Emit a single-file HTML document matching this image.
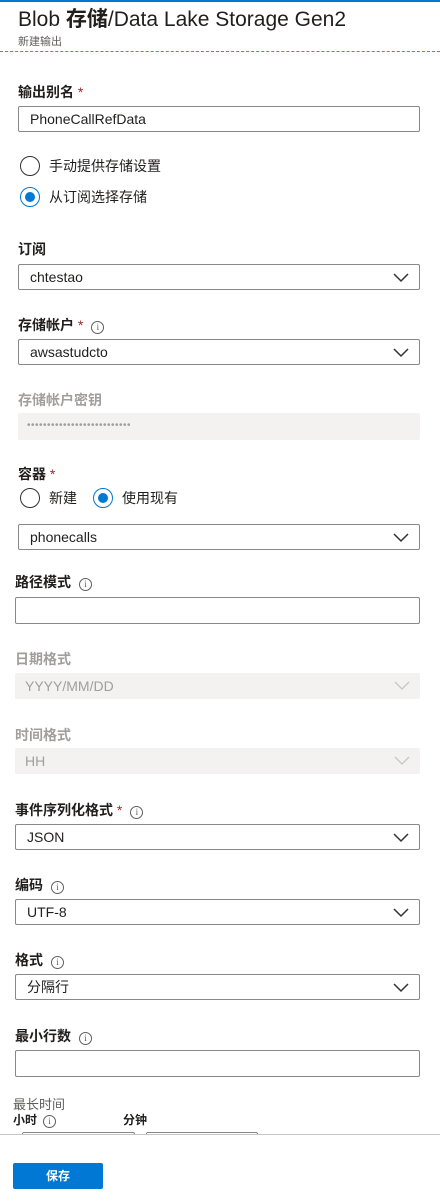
<!DOCTYPE html>
<html><head><meta charset="utf-8"><style>
*{margin:0;padding:0;box-sizing:border-box}
body{width:440px;height:1204px;position:relative;background:#fff;font-family:"Liberation Sans","Noto Sans CJK SC",sans-serif;color:#201f1e;overflow:hidden}
.a{position:absolute}
.lbl{position:absolute;font-size:14px;font-weight:bold;line-height:18px;white-space:nowrap}
.dis{color:#a19f9d}
.req{color:#a4262c;font-weight:normal}
.info{display:inline-block;width:13px;height:13px;border:1px solid #605e5c;border-radius:50%;font-size:9px;line-height:11px;text-align:center;color:#605e5c;font-weight:normal;vertical-align:0px;margin-left:8px;font-family:"Liberation Serif",serif}
.box{position:absolute;border:1px solid #8a8886;border-radius:2px;font-size:14px;line-height:24px;padding-left:11px;background:#fff}
.dbox{position:absolute;background:#f3f2f1;border-radius:2px;font-size:14px;line-height:26px;padding-left:10px;color:#a19f9d}
.chev{position:absolute;right:10px;top:8px;width:16px;height:10px}
.radio{position:absolute;width:20px;height:20px;border:1px solid #323130;border-radius:50%}
.radio.on{border-color:#0078d4}
.radio.on::after{content:"";position:absolute;left:4px;top:4px;width:10px;height:10px;border-radius:50%;background:#0078d4}
.rt{position:absolute;font-size:14px;line-height:18px;white-space:nowrap}
</style></head><body>
<div class="a" style="left:0;top:0;width:440px;height:2px;background:#0078d4"></div>
<div class="a" style="left:18px;top:7px;font-size:21px;line-height:26px;white-space:nowrap">Blob <b>存储</b>/Data Lake Storage Gen2</div>
<div class="a" style="left:18px;top:33px;font-size:11px;color:#605e5c">新建输出</div>
<div class="a" style="left:0;top:51px;width:440px;border-top:1px dashed #00a4ef"></div>

<div class="lbl" style="left:18px;top:83px">输出别名 <span class="req">*</span></div>
<div class="box" style="left:18px;top:106px;width:402px;height:26px">PhoneCallRefData</div>

<div class="radio" style="left:20px;top:156px"></div><div class="rt" style="left:49px;top:157px">手动提供存储设置</div>
<div class="radio on" style="left:20px;top:187px"></div><div class="rt" style="left:49px;top:188px">从订阅选择存储</div>

<div class="lbl" style="left:18px;top:240px">订阅</div>
<div class="box" style="left:18px;top:264px;width:402px;height:26px">chtestao<svg class="chev" viewBox="0 0 16 10"><path d="M1 1l7 7 7-7" fill="none" stroke="#323130" stroke-width="1.5"/></svg></div>

<div class="lbl" style="left:18px;top:316px">存储帐户 <span class="req">*</span><span class="info">i</span></div>
<div class="box" style="left:18px;top:339px;width:402px;height:26px">awsastudcto<svg class="chev" viewBox="0 0 16 10"><path d="M1 1l7 7 7-7" fill="none" stroke="#323130" stroke-width="1.5"/></svg></div>

<div class="lbl dis" style="left:18px;top:391px">存储帐户密钥</div>
<div class="dbox" style="left:18px;top:413px;width:402px;height:27px;letter-spacing:0.5px;font-size:10px;padding-left:9px">••••••••••••••••••••••••••</div>

<div class="lbl" style="left:18px;top:465px">容器 <span class="req">*</span></div>
<div class="radio" style="left:20px;top:488px"></div><div class="rt" style="left:49px;top:489px">新建</div>
<div class="radio on" style="left:93px;top:488px"></div><div class="rt" style="left:122px;top:489px">使用现有</div>
<div class="box" style="left:18px;top:524px;width:402px;height:26px">phonecalls<svg class="chev" viewBox="0 0 16 10"><path d="M1 1l7 7 7-7" fill="none" stroke="#323130" stroke-width="1.5"/></svg></div>

<div class="lbl" style="left:15px;top:573px">路径模式<span class="info">i</span></div>
<div class="box" style="left:15px;top:597px;width:405px;height:27px"></div>

<div class="lbl dis" style="left:15px;top:650px">日期格式</div>
<div class="dbox" style="left:15px;top:673px;width:405px;height:26px">YYYY/MM/DD<svg class="chev" viewBox="0 0 16 10"><path d="M1 1l7 7 7-7" fill="none" stroke="#c8c6c4" stroke-width="1.3"/></svg></div>

<div class="lbl dis" style="left:15px;top:726px">时间格式</div>
<div class="dbox" style="left:15px;top:748px;width:405px;height:26px">HH<svg class="chev" viewBox="0 0 16 10"><path d="M1 1l7 7 7-7" fill="none" stroke="#c8c6c4" stroke-width="1.3"/></svg></div>

<div class="lbl" style="left:15px;top:801px">事件序列化格式 <span class="req">*</span><span class="info">i</span></div>
<div class="box" style="left:15px;top:824px;width:405px;height:26px">JSON<svg class="chev" viewBox="0 0 16 10"><path d="M1 1l7 7 7-7" fill="none" stroke="#323130" stroke-width="1.5"/></svg></div>

<div class="lbl" style="left:15px;top:876px">编码<span class="info">i</span></div>
<div class="box" style="left:15px;top:899px;width:405px;height:26px">UTF-8<svg class="chev" viewBox="0 0 16 10"><path d="M1 1l7 7 7-7" fill="none" stroke="#323130" stroke-width="1.5"/></svg></div>

<div class="lbl" style="left:15px;top:951px">格式<span class="info">i</span></div>
<div class="box" style="left:15px;top:974px;width:405px;height:26px">分隔行<svg class="chev" viewBox="0 0 16 10"><path d="M1 1l7 7 7-7" fill="none" stroke="#323130" stroke-width="1.5"/></svg></div>

<div class="lbl" style="left:15px;top:1027px">最小行数<span class="info">i</span></div>
<div class="box" style="left:15px;top:1050px;width:405px;height:27px"></div>

<div class="a" style="left:13px;top:1094px;font-size:13px;color:#605e5c">最长时间</div>
<div class="lbl" style="left:13px;top:1111px;font-size:12px">小时<span class="info" style="margin-left:6px">i</span></div>
<div class="lbl" style="left:123px;top:1111px;font-size:12px">分钟</div>
<div class="a" style="left:22px;top:1132px;width:113px;height:6px;border:1px solid #8a8886;border-bottom:none;border-radius:2px 2px 0 0"></div>
<div class="a" style="left:146px;top:1132px;width:112px;height:6px;border:1px solid #8a8886;border-bottom:none;border-radius:2px 2px 0 0"></div>
<div class="a" style="left:0;top:1134px;width:440px;height:70px;background:#fff;border-top:1px solid #c8c6c4"></div>
<div class="a" style="left:13px;top:1163px;width:90px;height:26px;background:#0078d4;border-radius:2px;color:#fff;font-size:12px;font-weight:bold;line-height:26px;text-align:center">保存</div>
</body></html>
